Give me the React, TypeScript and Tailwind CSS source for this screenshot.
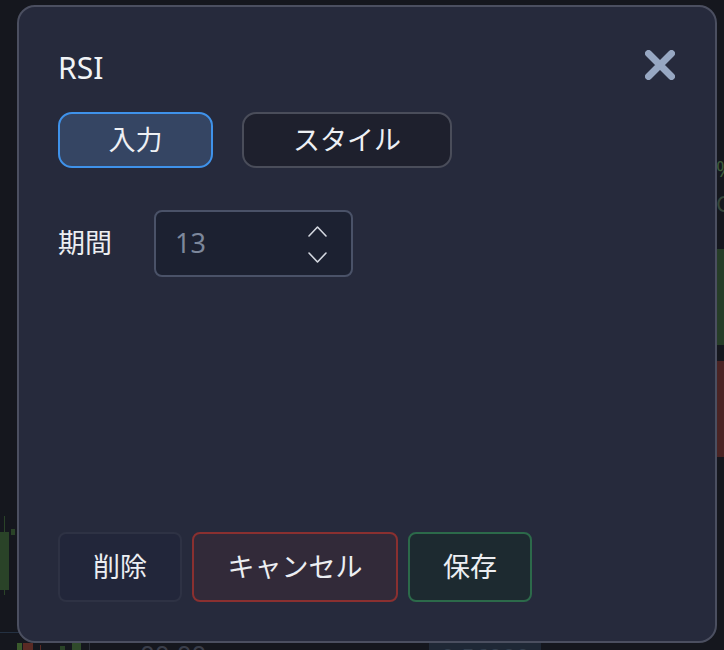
export default function App() {
  return (
    <div className="relative w-[724px] h-[650px] overflow-hidden bg-[#15171e] font-['Noto_Sans','Noto_Sans_CJK_JP',sans-serif]">
      {/* chart behind the modal, dimmed */}
      <div className="absolute left-[4px] top-[516px] w-[1px] h-[79px] bg-[#2a4328]" />
      <div className="absolute left-0 top-[532px] w-[9px] h-[58px] bg-[#2a4328]" />
      <div className="absolute left-[11px] top-[529px] w-[4px] h-[6px] bg-[#2a4328]" />
      <div className="absolute left-0 top-[632px] w-[20px] h-[1px] bg-[#243142]" />
      <div className="absolute left-[17px] top-[643px] w-[5px] h-[7px] bg-[#3a5a2c]" />
      <div className="absolute left-[23px] top-[643px] w-[10px] h-[7px] bg-[#5a2a24]" />
      <div className="absolute left-[40px] top-[645px] w-[1px] h-[5px] bg-[#5a2a24]" />
      <div className="absolute left-[60px] top-[646px] w-[5px] h-[4px] bg-[#2a4328]" />
      <div className="absolute left-[72px] top-[643px] w-[9px] h-[7px] bg-[#2f4a2a]" />
      <div className="absolute left-[89px] top-[642px] w-[1px] h-[8px] bg-[#2a2e38]" />
      <div className="absolute left-[140px] top-[641px] text-[26px] leading-[26px] text-[#3a3e4a]">00:00</div>
      <div className="absolute left-[429px] top-[643px] w-[112px] h-[7px] bg-[#1f2836] overflow-hidden">
        <div className="pl-[12px] pt-[2px] text-[24px] leading-[24px] text-[#34404f]">0.56000</div>
      </div>
      <div className="absolute left-[716px] top-[156px] text-[22px] leading-[24px] text-[#3d5a3a]">%</div>
      <div className="absolute left-[716px] top-[191px] text-[22px] leading-[24px] text-[#35463a]">C</div>
      <div className="absolute left-[716px] top-[249px] w-[8px] h-[96px] bg-[#263d28]" />
      <div className="absolute left-[716px] top-[361px] w-[8px] h-[96px] bg-[#4a2424]" />

      {/* modal */}
      <div className="absolute left-[17px] top-[5px] w-[700px] h-[638px] rounded-[18px] border-2 border-[#4b4f60] bg-[#262a3c] flex flex-col pl-[39px] pr-[40px] pt-[43px] pb-[39px]">
        <div className="flex justify-between items-start h-[30px]">
          <div className="pt-[3px] text-[30px] leading-[30px] text-[#f1f3f6]">RSI</div>
          <svg width="30" height="30" viewBox="0 0 30 30" fill="none">
            <path
              d="M3.5 3.5L26.5 26.5M26.5 3.5L3.5 26.5"
              stroke="#97a7c2"
              strokeWidth="7"
              strokeLinecap="round"
            />
          </svg>
        </div>

        <div className="mt-[32px] flex gap-[29px]">
          <button className="w-[155px] h-[56px] rounded-[14px] border-2 border-[#3f92ea] bg-[#354563] text-[27px] text-[#eef0f4] flex items-center justify-center">
            入力
          </button>
          <button className="w-[210px] h-[56px] rounded-[14px] border-2 border-[#4a4d5a] bg-[#1e202d] text-[27px] text-[#eef0f4] flex items-center justify-center">
            スタイル
          </button>
        </div>

        <div className="mt-[42px] flex items-center">
          <div className="w-[96px] text-[27px] text-[#eceef2]">期間</div>
          <div className="w-[199px] h-[67px] rounded-[8px] border-2 border-[#4a5268] bg-[#1c2131] flex items-center justify-between pl-[19px] pr-[24px]">
            <span className="text-[27px] text-[#7d889c]">13</span>
            <svg width="19" height="40" viewBox="0 0 19 40" fill="none" className="mt-[2px]">
              <path d="M1 11L9.5 2L18 11" stroke="#d3d7df" strokeWidth="1.6" strokeLinecap="round" strokeLinejoin="round" />
              <path d="M1 28L9.5 37L18 28" stroke="#d3d7df" strokeWidth="1.6" strokeLinecap="round" strokeLinejoin="round" />
            </svg>
          </div>
        </div>

        <div className="mt-auto flex gap-[10px]">
          <button className="w-[124px] h-[70px] rounded-[8px] border-2 border-[#2e3244] bg-[#22263a] text-[27px] text-[#eceef2] flex items-center justify-center">
            削除
          </button>
          <button className="w-[206px] h-[70px] rounded-[8px] border-2 border-[#8a3030] bg-[#322a39] text-[27px] text-[#eceef2] flex items-center justify-center">
            キャンセル
          </button>
          <button className="w-[124px] h-[70px] rounded-[8px] border-2 border-[#2c6a4a] bg-[#1d2a30] text-[27px] text-[#eceef2] flex items-center justify-center">
            保存
          </button>
        </div>
      </div>
    </div>
  );
}
